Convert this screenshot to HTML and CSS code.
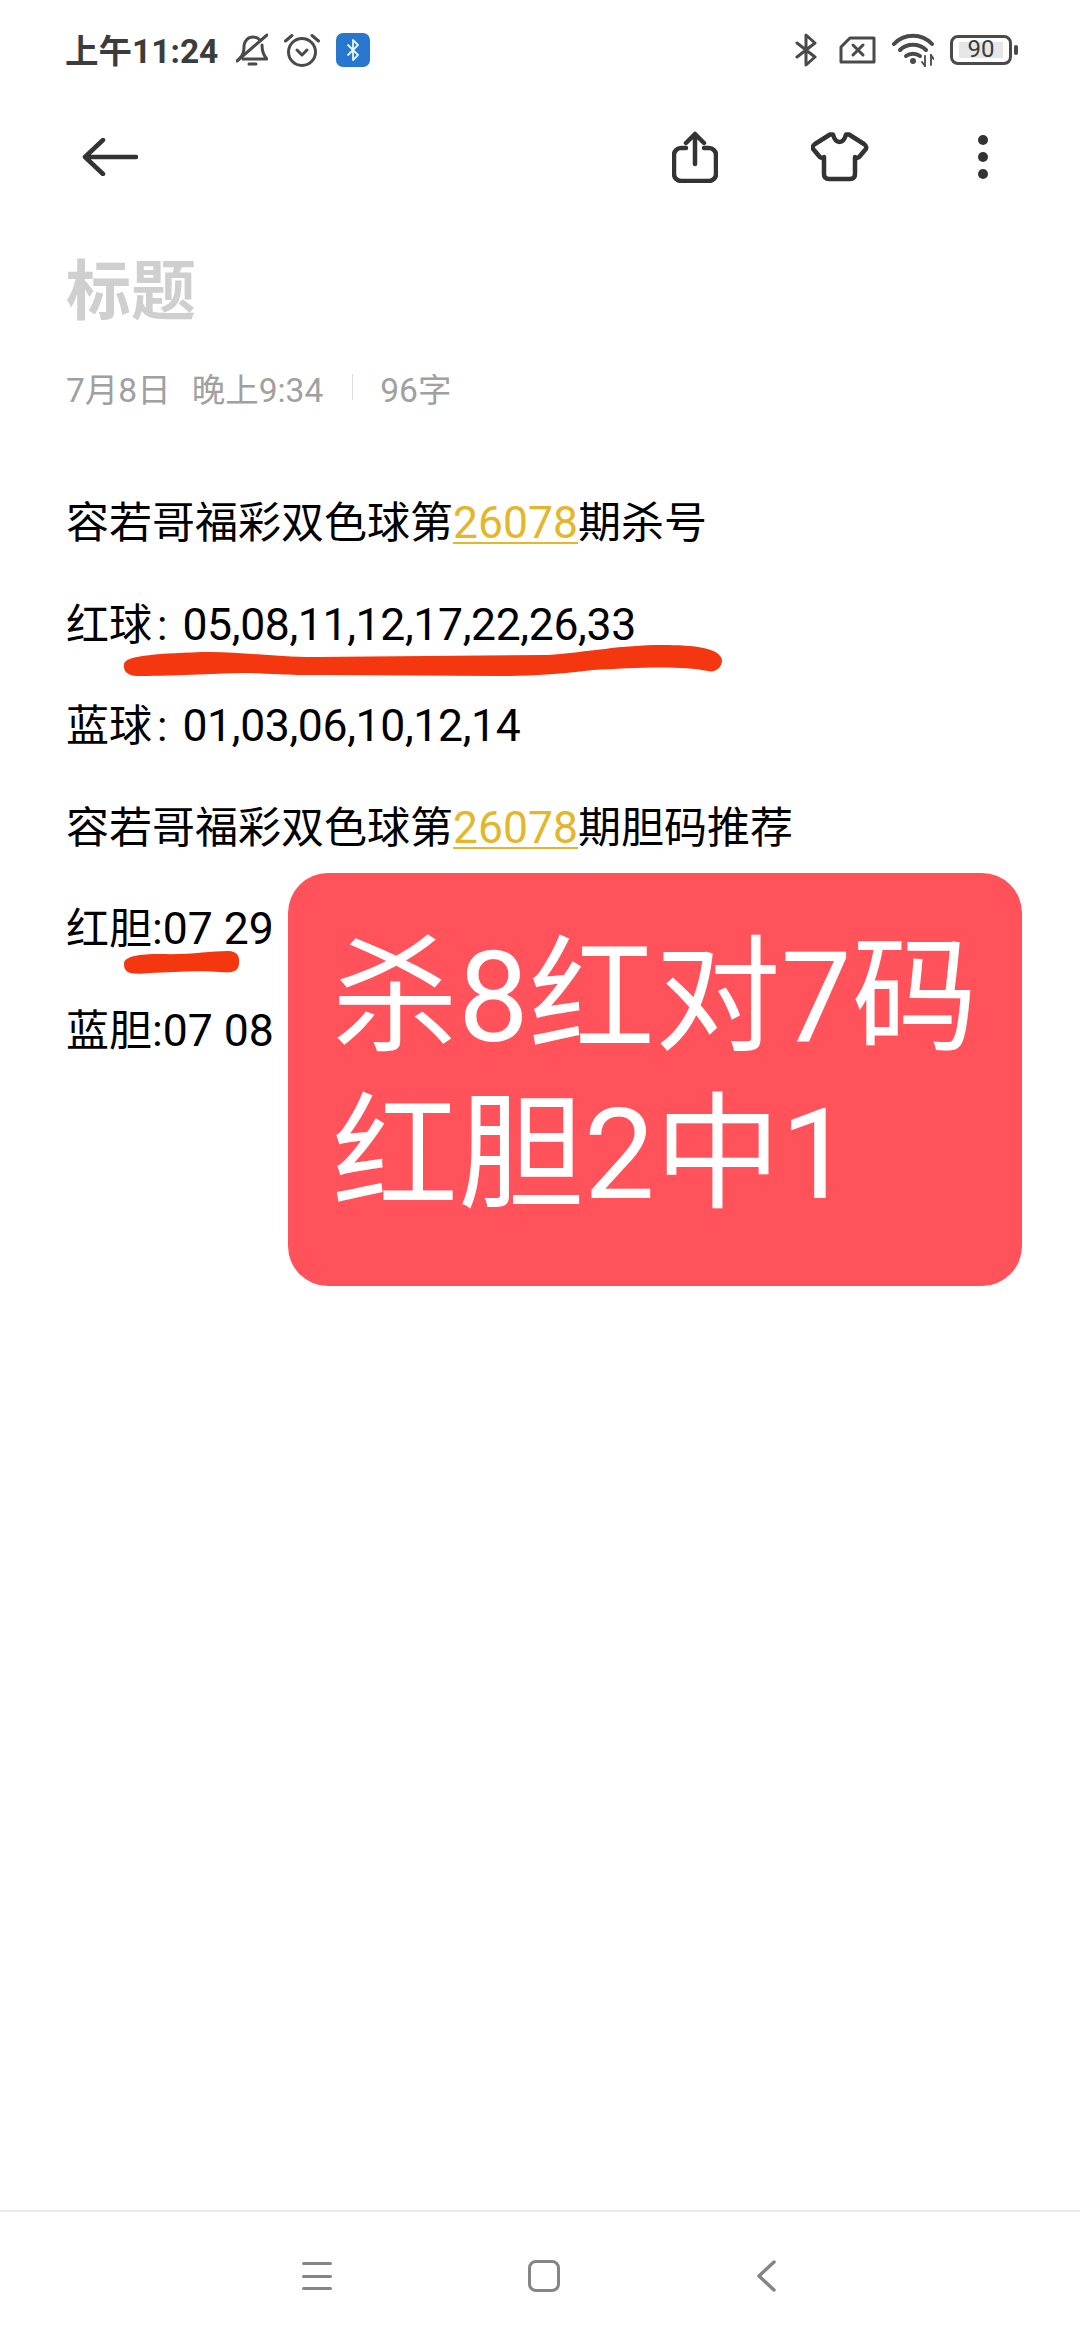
FILE: index.html
```html
<!DOCTYPE html>
<html lang="zh-CN">
<head>
    <meta charset="UTF-8">
    <meta name="viewport" content="width=device-width, initial-scale=1.0">
    <title>标题</title>
    <link rel="stylesheet" href="styles.css">
</head>
<body>
<div class="page">

    <!-- Status bar -->
    <div class="status-bar">
        <div class="status-left">
            <span class="time">上午11:24</span>
            <svg class="ic-bell" width="32" height="34" viewBox="0 0 32 34" fill="none" stroke="#4a4a4a" stroke-width="3" stroke-linecap="round" stroke-linejoin="round">
                <path d="M4 25c3-3 4-6 4-11 0-6 4-10 9-10 3 0 5 1 7 3"/>
                <path d="M26 12c0 6 1 10 5 14H7"/>
                <path d="M1 28 31 2"/>
                <path d="M13 31h7" stroke-width="3"/>
            </svg>
            <svg class="ic-alarm" width="36" height="34" viewBox="0 0 36 34" fill="none" stroke="#4a4a4a" stroke-width="3" stroke-linecap="round" stroke-linejoin="round">
                <circle cx="18" cy="19" r="13.5"/>
                <path d="M1.5 8 8 2.500M34.500 8 28 2.500"/>
                <path d="M13 17l5 5 5-5"/>
            </svg>
            <svg class="ic-tile" width="34" height="34" viewBox="0 0 34 34">
                <rect width="34" height="34" rx="7" fill="#2877cf"/>
                <path d="M11.500 11.500 22 22l-5 5V7l5 5-10.500 10.500" fill="none" stroke="#e6f6ff" stroke-width="1.800" stroke-linejoin="round"/>
            </svg>
        </div>
        <div class="status-right">
            <svg class="ic-bt" width="22" height="34" viewBox="0 0 22 34" fill="none" stroke="#4a4a4a" stroke-width="3" stroke-linecap="round" stroke-linejoin="round">
                <path d="M2 10 20 24l-9 8V2l9 8L2 24"/>
            </svg>
            <svg width="37" height="28" viewBox="0 0 37 28" fill="none" stroke="#4a4a4a" stroke-width="3" stroke-linejoin="round" stroke-linecap="round">
                <path d="M11 2h24v24H2V11z"/>
                <path d="M14 9l10 10M24 9 14 19"/>
            </svg>
            <svg width="42" height="34" viewBox="0 0 42 34" fill="none" stroke="#4a4a4a" stroke-width="4" stroke-linecap="round">
                <path d="M2 11c10-11 28-11 38 0"/>
                <path d="M8 17c7-7 19-7 26 0"/>
                <path d="M14 23c4-3 10-3 14 0"/>
                <circle cx="21" cy="28" r="3" fill="#4a4a4a" stroke="none"/>
                <path d="M33 23v10M39 22v10" stroke-width="1.800"/>
                <path d="M30 29l3 4M39 22l2.500 4" stroke-width="1.800"/>
            </svg>
            <div class="battery">
                <div class="battery-body">
                    <div class="battery-fill">90</div>
                </div>
                <div class="battery-tip"></div>
            </div>
        </div>
    </div>

    <!-- Toolbar -->
    <div class="toolbar">
        <svg width="56" height="38" viewBox="0 0 56 38" fill="none" stroke="#333" stroke-width="4.500" stroke-linecap="round" stroke-linejoin="round">
            <path d="M54 19H3M21 2 3 19l18 17"/>
        </svg>
        <div class="toolbar-right">
            <svg width="46" height="52" viewBox="0 0 46 52" fill="none" stroke="#333" stroke-width="4.500" stroke-linecap="round" stroke-linejoin="round">
                <path d="M14 17H9a7 7 0 0 0-7 7v19a7 7 0 0 0 7 7h28a7 7 0 0 0 7-7V24a7 7 0 0 0-7-7h-5"/>
                <path d="M23 33V3M14 12l9-9 9 9"/>
            </svg>
            <svg width="58" height="50" viewBox="0 0 58 50" fill="none" stroke="#333" stroke-width="4.500" stroke-linecap="round" stroke-linejoin="round">
                <path d="M19 2.500 4 12q-4 3-1 6l5 6q2 3 5 1v17q0 5 5 5h21q5 0 5-5V25q3 2 5-1l5-6q3-3-1-6L38 2.500h-3Q33 10 28.500 10T22 2.500z"/>
            </svg>
            <div class="dots"><i></i><i></i><i></i></div>
        </div>
    </div>

    <!-- Note -->
    <div class="note">
        <h1 class="note-title">标题</h1>
        <div class="note-meta">
            <span>7月8日</span>
            <span class="meta-time">晚上9:34</span>
            <span class="meta-line"></span>
            <span>96字</span>
        </div>
        <div class="note-body">
            <p>容若哥福彩双色球第<a class="link num">26078</a>期杀号</p>
            <p>红球<span class="colon">:</span><span class="num seq">05,08,11,12,17,22,26,33</span></p>
            <p>蓝球<span class="colon">:</span><span class="num seq">01,03,06,10,12,14</span></p>
            <p>容若哥福彩双色球第<a class="link num">26078</a>期胆码推荐</p>
            <p>红胆<span class="num">:07 29</span></p>
            <p>蓝胆<span class="num">:07 08</span></p>
        </div>
    </div>

    <!-- Bottom nav -->
    <div class="nav-bar">
        <div class="nav-menu"><i></i><i></i><i></i></div>
        <div class="nav-home"></div>
        <svg width="20" height="32" viewBox="0 0 20 32" fill="none" stroke="#858585" stroke-width="3.500" stroke-linecap="round" stroke-linejoin="round">
            <path d="M18 2 3 16l15 14"/>
        </svg>
    </div>

    <!-- Pen marks over the text -->
    <svg class="mark mark-long" width="606" height="40" viewBox="0 0 606 40">
        <path d="M4 24C6 16 30 14 81 12c39-1 69 5 115 5l231-2c43-3 73-10 115-10 33 0 58 3 60 15 0 8-7 13-14 11-28-6-78-3-115-1-33 4-63 6-93 6l-180-1c-40 0-60-2-73-2-27 0-67 3-107 3C8 36 3 32 4 24z" fill="#f4370f"/>
    </svg>
    <svg class="mark mark-short" width="124" height="30" viewBox="0 0 124 30">
        <path d="M4 16c0-8 16-10 36-10 30 1 50-3 68-3 9 0 12 5 11 13-1 8-7 9-19 8-20-2-50 0-70 1-20 2-26 0-26-9z" fill="#f4370f"/>
    </svg>

    <!-- Red card -->
    <div class="promo">
        <div>杀8红对7码</div>
        <div>红胆2中1</div>
    </div>

</div>
</body>
</html>
```

FILE: styles.css
```css
* {
    box-sizing: border-box;
}

body {
    margin: 0;
    background: #fff;
    font-family: Roboto, "Noto Sans CJK SC", sans-serif;
}

.page {
    position: relative;
    width: 1080px;
    height: 2340px;
    display: flex;
    flex-direction: column;
    overflow: hidden;
}

/* Status bar */
.status-bar {
    height: 100px;
    padding: 0 62px 0 65px;
    display: flex;
    justify-content: space-between;
    align-items: center;
}

.status-left,
.status-right {
    display: flex;
    align-items: center;
}

.status-left {
    gap: 16px;
}

.status-right {
    gap: 16px;
}

.ic-bt {
    margin-right: 6px;
}

.time {
    font-size: 33.500px;
    font-weight: 700;
    color: #3c3c3c;
    width: 155px;
    margin-top: -4px;
    white-space: nowrap;
}

.battery {
    display: flex;
    align-items: center;
    gap: 2px;
}

.battery-body {
    width: 62px;
    height: 30px;
    border: 3.5px solid #4a4a4a;
    border-radius: 8px;
    padding: 4px 6px;
}

.battery-fill {
    height: 100%;
    background: #e6e6e6;
    color: #3c3c3c;
    font-size: 24px;
    line-height: 15px;
    text-align: center;
}

.battery-tip {
    width: 4px;
    height: 10px;
    background: #4a4a4a;
    border-radius: 2px;
}

/* Toolbar */
.toolbar {
    height: 114px;
    padding: 0 92px 0 82px;
    display: flex;
    justify-content: space-between;
    align-items: center;
}

.toolbar-right {
    display: flex;
    align-items: center;
    gap: 93px;
}

.dots {
    width: 10px;
    margin-left: 16px;
    display: flex;
    flex-direction: column;
    gap: 7px;
}

.dots i {
    width: 10px;
    height: 10px;
    border-radius: 50%;
    background: #333;
}

/* Note */
.note {
    flex: 1;
    padding: 38px 0 0 66px;
}

.note-title {
    margin: 0;
    font-size: 65px;
    font-weight: 700;
    line-height: 80px;
    color: #cfcfcf;
}

.note-meta {
    margin-top: 35px;
    height: 40px;
    display: flex;
    align-items: center;
    font-size: 33.500px;
    color: #a0a0a0;
}

.meta-time {
    margin-left: 21px;
}

.meta-line {
    width: 1px;
    height: 26px;
    margin: 0 27px 0 29px;
    background: #dcdcdc;
}

.note-body {
    margin-top: 66px;
    font-size: 43px;
    line-height: 101.500px;
    color: #000;
}

.note-body p {
    margin: 0;
    height: 101.500px;
    white-space: nowrap;
}

.num {
    font-size: 44.500px;
}

.seq {
    letter-spacing: -0.35px;
}

.link {
    color: #e4b62c;
    text-decoration: underline;
    text-decoration-thickness: 2px;
    text-underline-offset: 4px;
}

.colon {
    padding: 0 15px 0 5px;
}

/* Bottom nav */
.nav-bar {
    height: 130px;
    border-top: 2px solid #ebebeb;
    padding: 0 304px 0 302px;
    display: flex;
    justify-content: space-between;
    align-items: center;
}

.nav-menu {
    width: 30px;
    display: flex;
    flex-direction: column;
    gap: 9.500px;
}

.nav-menu i {
    height: 3px;
    border-radius: 2px;
    background: #858585;
}

.nav-home {
    width: 32px;
    height: 32px;
    border: 3.500px solid #858585;
    border-radius: 8px;
}

/* Pen marks */
.mark {
    position: absolute;
}

.mark-long {
    left: 120px;
    top: 640px;
}

.mark-short {
    left: 120px;
    top: 948px;
}

/* Red card */
.promo {
    position: absolute;
    left: 288px;
    top: 873px;
    width: 734px;
    height: 413px;
    padding: 47px 0 0 44px;
    background: #ff525a;
    border-radius: 40px;
    color: #fff;
    font-size: 126px;
    line-height: 157px;
    white-space: nowrap;
}
```
